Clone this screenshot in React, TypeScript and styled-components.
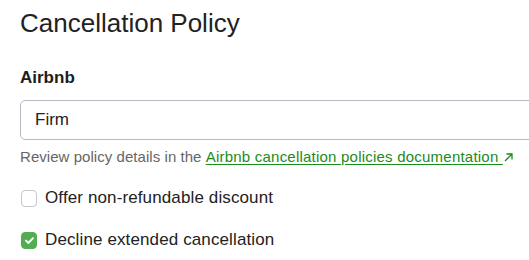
import React from "react";
import styled, { createGlobalStyle } from "styled-components";

const Global = createGlobalStyle`
  html, body { margin: 0; padding: 0; background: #fff; overflow: hidden; }
  body { font-family: "Liberation Sans", Arial, sans-serif; color: #222; }
`;

const Page = styled.div`
  padding: 8px 0 0 20px;
  width: 620px;
`;

const Title = styled.h1`
  margin: 0;
  font-size: 26px;
  line-height: 30px;
  font-weight: 400;
  color: #222;
`;

const Section = styled.section`
  margin-top: 30px;
  display: flex;
  flex-direction: column;
`;

const Label = styled.label`
  font-size: 17px;
  line-height: 20px;
  font-weight: 700;
  color: #1d1d1d;
`;

const Input = styled.div`
  margin-top: 12px;
  box-sizing: border-box;
  height: 40px;
  border: 1px solid #b3bac1;
  border-radius: 5px;
  padding: 0 14px;
  display: flex;
  align-items: center;
  font-size: 17px;
  line-height: 20px;
  color: #222;
`;

const Help = styled.p`
  margin: 8px 0 0;
  font-size: 15px;
  line-height: 18px;
  color: #666;
  letter-spacing: 0.05px;
`;

const Link = styled.a`
  color: #1a8c1a;
  text-decoration: underline;
  text-underline-offset: 2px;
  letter-spacing: 0.22px;
`;

const Options = styled.div`
  margin-top: 22px;
  display: flex;
  flex-direction: column;
  gap: 22px;
`;

const Row = styled.label`
  display: flex;
  align-items: center;
  gap: 8px;
  font-size: 17px;
  line-height: 20px;
  letter-spacing: 0.12px;
  color: #222;
`;

const Box = styled.span<{ $checked?: boolean }>`
  box-sizing: border-box;
  width: 16px;
  height: 17px;
  margin-left: 1px;
  border-radius: 4px;
  border: 1px solid ${(p) => (p.$checked ? "#52ad52" : "#c2c8ce")};
  background: ${(p) => (p.$checked ? "#52ad52" : "#fff")};
  display: inline-flex;
  align-items: center;
  justify-content: center;
  flex: none;
`;

const Arrow = () => (
  <svg width="9" height="9" viewBox="0 0 9 9" style={{ marginLeft: 1 }}>
    <path d="M1 8 L8 1 M2.5 1 H8 V6.5" fill="none" stroke="#1a8c1a" strokeWidth="1.3" />
  </svg>
);

const Check = () => (
  <svg width="11" height="9" viewBox="0 0 11 9">
    <path d="M2 4.6 L4.4 7 L9 2.2" fill="none" stroke="#fff" strokeWidth="1.9" strokeLinecap="round" strokeLinejoin="round" />
  </svg>
);

export default function App() {
  return (
    <Page>
      <Global />
      <Title>Cancellation Policy</Title>
      <Section>
        <Label>Airbnb</Label>
        <Input>Firm</Input>
        <Help>
          Review policy details in the{" "}
          <Link href="#">
            Airbnb cancellation policies documentation&nbsp;
          </Link>
          <Arrow />
        </Help>
        <Options>
          <Row>
            <Box />
            Offer non-refundable discount
          </Row>
          <Row>
            <Box $checked>
              <Check />
            </Box>
            Decline extended cancellation
          </Row>
        </Options>
      </Section>
    </Page>
  );
}
